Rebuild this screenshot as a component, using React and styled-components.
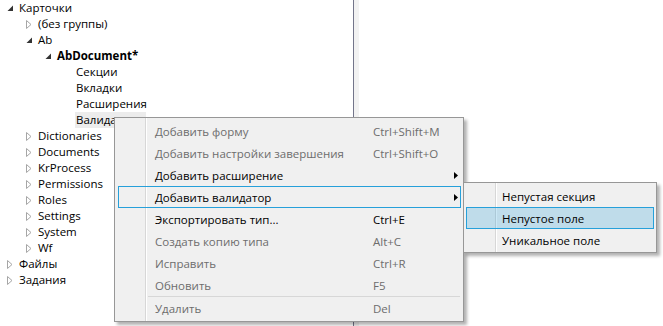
import React from "react";
import styled, { createGlobalStyle, css } from "styled-components";

const Global = createGlobalStyle`
  html, body { margin: 0; padding: 0; background: #fff; }
  body { font-family: "Open Sans", "Noto Sans", sans-serif; font-size: 11.5px; }
  #root { width: 663px; height: 326px; overflow: hidden; }
`;

const Page = styled.div`
  position: relative;
  display: flex;
  width: 663px;
  height: 326px;
  background: #fff;
  overflow: hidden;
`;

const TreePanel = styled.div`
  width: 353px;
  height: 100%;
  border-right: 1px solid #73758a;
  display: flex;
  flex-direction: column;
  box-sizing: content-box;
`;

const Splitter = styled.div`
  width: 5px;
  background: #f2f2f2;
`;

const RightPane = styled.div`
  flex: 1;
  background: #fff;
`;

const Row = styled.div`
  display: flex;
  align-items: center;
  height: 16px;
  padding-left: ${(p) => 3 + p.$level * 19}px;
  color: #000;
  font-size: 11.5px;
  line-height: 16px;
  white-space: nowrap;
`;

const Toggle = styled.span`
  display: flex;
  align-items: center;
  width: 16px;
  height: 16px;
  padding-left: 4px;
  box-sizing: border-box;
  flex: none;
`;

const Label = styled.span`
  font-weight: ${(p) => (p.$bold ? 700 : 400)};
  padding: 0 1px;
  background: ${(p) => (p.$selected ? "#ececec" : "transparent")};
  margin-left: -1px;
`;

const Expanded = () => (
  <svg width="7" height="7" viewBox="0 0 7 7">
    <polygon points="6,0.5 6,6 0.5,6" fill="#333" />
  </svg>
);

const Collapsed = () => (
  <svg width="6" height="9" viewBox="0 0 6 9">
    <polygon points="0.5,0.5 5,4.5 0.5,8.5" fill="#fff" stroke="#a6a6a6" strokeWidth="1" />
  </svg>
);

const Menu = styled.div`
  position: absolute;
  left: ${(p) => p.$x}px;
  top: ${(p) => p.$y}px;
  width: ${(p) => p.$w}px;
  box-sizing: border-box;
  border: 1px solid #979797;
  padding: 2px 2px ${(p) => p.$pb}px ${(p) => p.$pl}px;
  background:
    linear-gradient(
      to right,
      transparent ${(p) => p.$sep}px,
      #d7d7d7 ${(p) => p.$sep}px,
      #d7d7d7 ${(p) => p.$sep + 1}px,
      #ffffff ${(p) => p.$sep + 1}px,
      #ffffff ${(p) => p.$sep + 2}px,
      transparent ${(p) => p.$sep + 2}px
    ),
    #f0f0f0;
  box-shadow: 3px 3px 3px rgba(0, 0, 0, 0.3);
  display: flex;
  flex-direction: column;
`;

const Item = styled.div`
  display: grid;
  grid-template-columns: ${(p) => p.$icon}px 1fr 71px 16px;
  align-items: center;
  height: 22px;
  box-sizing: border-box;
  border: 1px solid transparent;
  color: ${(p) => (p.$disabled ? "#6d6d6d" : "#000")};
  font-size: 11.5px;
  white-space: nowrap;
  ${(p) =>
    p.$open &&
    css`
      border-color: #26a0da;
    `}
  ${(p) =>
    p.$hover &&
    css`
      border-color: #26a0da;
      background: rgba(38, 160, 218, 0.24);
    `}
`;

const ItemText = styled.span`
  grid-column: 2;
  padding-left: ${(p) => p.$pad}px;
`;

const Shortcut = styled.span`
  grid-column: 3;
`;

const Arrow = styled.span`
  grid-column: 4;
  display: flex;
  justify-content: flex-end;
  padding-right: 2px;
`;

const Separator = styled.div`
  height: 1px;
  margin-left: 30px;
  margin-right: 1px;
  background: #d7d7d7;
`;

const SubArrow = () => (
  <svg width="4" height="7" viewBox="0 0 4 7">
    <polygon points="0,0 4,3.5 0,7" fill="#000" />
  </svg>
);

const tree = [
  { l: 0, t: "Карточки", s: "e" },
  { l: 1, t: "(без группы)", s: "c" },
  { l: 1, t: "Ab", s: "e" },
  { l: 2, t: "AbDocument*", s: "e", bold: true },
  { l: 3, t: "Секции" },
  { l: 3, t: "Вкладки" },
  { l: 3, t: "Расширения" },
  { l: 3, t: "Валидаторы", sel: true },
  { l: 1, t: "Dictionaries", s: "c" },
  { l: 1, t: "Documents", s: "c" },
  { l: 1, t: "KrProcess", s: "c" },
  { l: 1, t: "Permissions", s: "c" },
  { l: 1, t: "Roles", s: "c" },
  { l: 1, t: "Settings", s: "c" },
  { l: 1, t: "System", s: "c" },
  { l: 1, t: "Wf", s: "c" },
  { l: 0, t: "Файлы", s: "c" },
  { l: 0, t: "Задания", s: "c" },
];

const menu = [
  { t: "Добавить форму", k: "Ctrl+Shift+M", d: true },
  { t: "Добавить настройки завершения", k: "Ctrl+Shift+O", d: true },
  { t: "Добавить расширение", sub: true },
  { t: "Добавить валидатор", sub: true, open: true },
  { t: "Экспортировать тип...", k: "Ctrl+E" },
  { t: "Создать копию типа", k: "Alt+C", d: true },
  { t: "Исправить", k: "Ctrl+R", d: true },
  { t: "Обновить", k: "F5", d: true },
  { sep: true },
  { t: "Удалить", k: "Del", d: true },
];

const submenu = [
  { t: "Непустая секция" },
  { t: "Непустое поле", hover: true },
  { t: "Уникальное поле" },
];

export default function App() {
  return (
    <>
      <Global />
      <Page>
        <TreePanel>
          {tree.map((r, i) => (
            <Row key={i} $level={r.l}>
              <Toggle>{r.s === "e" ? <Expanded /> : r.s === "c" ? <Collapsed /> : null}</Toggle>
              <Label $bold={r.bold} $selected={r.sel}>
                {r.t}
              </Label>
            </Row>
          ))}
        </TreePanel>
        <Splitter />
        <RightPane />

        <Menu $x={114} $y={117} $w={350} $pl={3} $pb={2} $sep={30}>
          {menu.map((m, i) =>
            m.sep ? (
              <Separator key={i} />
            ) : (
              <Item key={i} $icon={26} $disabled={m.d} $open={m.open}>
                <ItemText $pad={10}>{m.t}</ItemText>
                {m.k && <Shortcut>{m.k}</Shortcut>}
                {m.sub && (
                  <Arrow>
                    <SubArrow />
                  </Arrow>
                )}
              </Item>
            )
          )}
        </Menu>

        <Menu $x={463} $y={182} $w={194} $pl={2} $pb={1} $sep={31}>
          {submenu.map((m, i) => (
            <Item key={i} $icon={27} $hover={m.hover}>
              <ItemText $pad={8}>{m.t}</ItemText>
            </Item>
          ))}
        </Menu>
      </Page>
    </>
  );
}
